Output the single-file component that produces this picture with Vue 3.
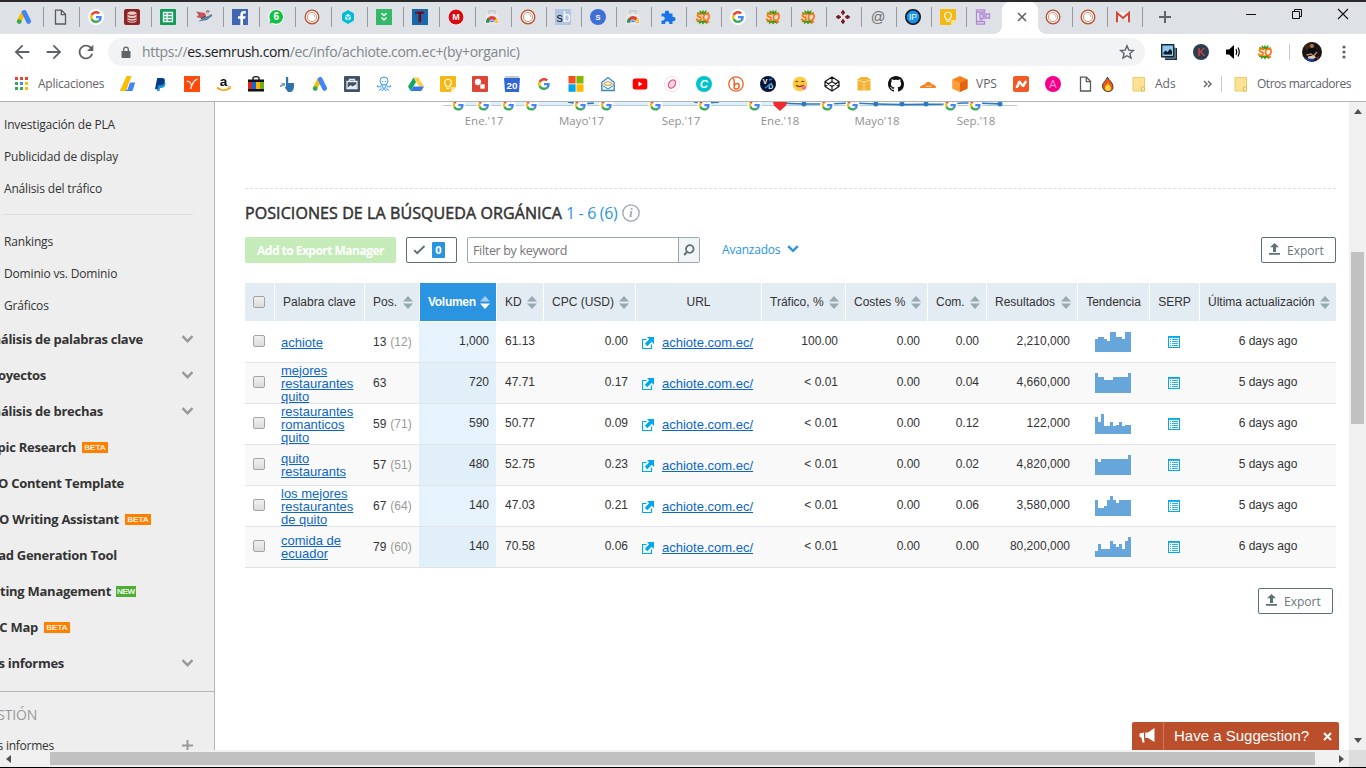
<script setup>
const g = '<path fill="#EA4335" d="M24 9.5c3.54 0 6.71 1.22 9.21 3.6l6.85-6.85C35.9 2.38 30.47 0 24 0 14.62 0 6.51 5.38 2.56 13.22l7.98 6.19C12.43 13.72 17.74 9.5 24 9.5z"/><path fill="#4285F4" d="M46.98 24.55c0-1.57-.15-3.09-.38-4.55H24v9.02h12.94c-.58 2.96-2.26 5.48-4.78 7.18l7.73 6c4.51-4.18 7.09-10.36 7.09-17.65z"/><path fill="#FBBC05" d="M10.53 28.59c-.48-1.45-.76-2.99-.76-4.59s.27-3.14.76-4.59l-7.98-6.19C.92 16.46 0 20.12 0 24c0 3.88.92 7.54 2.56 10.78l7.97-6.19z"/><path fill="#34A853" d="M24 48c6.48 0 11.93-2.13 15.89-5.81l-7.73-6c-2.15 1.45-4.92 2.3-8.16 2.3-6.26 0-11.57-4.22-13.47-9.91l-7.98 6.19C6.51 42.62 14.62 48 24 48z"/>'
const t = (s, x, y, size, fill, extra = '') => `<text x="${x}" y="${y}" font-size="${size}" fill="${fill}" text-anchor="middle" font-family="Liberation Sans, Arial, sans-serif" ${extra}>${s}</text>`
const bold = 'font-weight="700"'

const icons = {
  ads: '<path d="M7.8 3 3.2 12" stroke="#fbbc04" stroke-width="4.6" stroke-linecap="butt"/><path d="M8.2 3.4 12.6 12.4" stroke="#4285f4" stroke-width="4.8" stroke-linecap="round"/><circle cx="3.2" cy="12.6" r="2.4" fill="#34a853"/>',
  page: '<path d="M3.5 1.2h6l4 4v9.8h-10z M9.3 1.4v4.2h4" fill="none" stroke="#5a5a5a" stroke-width="1.3"/>',
  google: `<circle cx="8" cy="8" r="8" fill="#fff"/><g transform="translate(2 2) scale(.25)">${g}</g>`,
  googlePlain: `<g transform="translate(2 2) scale(.25)">${g}</g>`,
  db: '<rect width="16" height="16" rx="2" fill="#8c2626"/><path d="M3.5 4.2c0-1 2-1.7 4.5-1.7s4.5.7 4.5 1.7v7.8c0 1-2 1.7-4.5 1.7S3.5 13 3.5 12z" fill="#e9c9c4"/><path d="M3.5 5.2c1.6 1.6 7.4 1.6 9 0M3.5 8.4c1.6 1.6 7.4 1.6 9 0M3.5 11c1.6 1.6 7.4 1.6 9 0" stroke="#8c2626" fill="none"/>',
  sheets: '<rect width="16" height="16" rx="1" fill="#0f9d58"/><path d="M3.5 3.5h9v9h-9zM3.5 6.5h9M3.5 9.5h9M7 3.5v9" stroke="#fff" stroke-width="1.3" fill="none"/>',
  hero: '<path d="M0 2.500 9 4l1.500 4-5 1.500-5-1.500L2.600 6z" fill="#c5555b"/><path d="m2 12.800 5-3.600 5-2.200 4-2 .2 2-5.200 4-4.500.8z" fill="#5583a3"/><circle cx="11.700" cy="4" r="1.600" fill="#edb99b"/><path d="M10.300 3.200c.2-1.800 2.700-1.800 3-.3" stroke="#294254" fill="none"/><path d="M5 9.800l4-2.500" stroke="#294254"/>',
  facebook: '<rect width="16" height="16" fill="#4267b2"/><path d="M11 16V9.8h2.2l.4-2.6H11V5.8c0-.9.4-1.4 1.5-1.4h1.2V2.1C13.200 2 12.700 2 12 2 9.700 2 8.400 3.300 8.400 5.500v1.700H6v2.600h2.400V16z" fill="#fff"/>',
  whatsapp: '<circle cx="8" cy="8" r="7.9" fill="#fff"/><circle cx="8.200" cy="7.800" r="6.900" fill="#12c143"/><path d="m1.600 14.500 1-4.500 3 3.200z" fill="#12c143"/>' + t('6', 8.2, 11.4, 10, '#fff', bold),
  ring: '<circle cx="8" cy="8" r="6.800" fill="#fff" stroke="#b4502f" stroke-width="1.300"/><circle cx="8" cy="8" r="4.600" fill="none" stroke="#cf8368" stroke-width=".9"/><path d="M8.500 5.200c1.500.2 2.300 1.300 2.200 2.600" stroke="#e9a58e" fill="none"/>',
  cube: '<path d="M8 1.500 13.500 4.700v6.600L8 14.500 2.500 11.300V4.700z" fill="#00bcd4" stroke="#00bcd4" stroke-linejoin="round"/><path d="m8 5 2.700 1.500L8 8 5.300 6.500zM5 7.300l2.500 1.400v2.700L5 10zM11 7.300 8.500 8.700v2.700L11 10z" fill="#d8f7fb"/>',
  green: '<rect width="16" height="16" fill="#34b96a"/><path d="M5.500 4.200 8 6.500l2.500-2.300M5.500 8.500 8 11l2.500-2.500" stroke="#fff" stroke-width="1.300" fill="none"/>',
  t: '<rect width="16" height="16" fill="#1769ad"/>' + t('T', 8, 13, 14, '#160a12', 'font-weight="700" stroke="#8e1734" stroke-width=".9"'),
  mega: '<circle cx="8" cy="8" r="8" fill="#fff"/><circle cx="8" cy="8" r="7.500" fill="#d9090f"/>' + t('M', 8, 11.2, 9, '#fff', bold),
  store: '<path d="M2 5h12l1.500 10.500H.500z" fill="#e9e9e9"/><path d="M5 5V2h6v3" stroke="#c3c7ca" fill="none" stroke-width="1.300"/><path d="M2 13.500a6 6.500 0 0 1 12 0z" fill="#db4437"/><path d="M2 13.500c0-1.500.6-3.200 1.700-4.500L7 13.500z" fill="#109d59"/><path d="M9 13.500 12.400 9c1.200 1.200 1.600 3 1.600 4.500z" fill="#ffcd40"/><path d="M5.500 13.500a2.500 2.700 0 0 1 5 0z" fill="#4285f4" stroke="#fff" stroke-width=".7"/>',
  sb: '<rect width="16" height="16" fill="#b0c4e4"/>' + t('s', 4.6, 13, 12.5, '#111') + t('b', 11.6, 13, 14, '#fff'),
  s: '<circle cx="8" cy="8" r="8" fill="#3f6fd6"/>' + t('S', 8, 10.8, 7.5, '#fff', bold),
  puzzle: '<path d="M1.500 4.500H5A2.200 2.200 0 1 1 9 4.500h3.500V8A2.200 2.200 0 1 1 12.500 12v3H9.200a2.100 2.100 0 1 0-4 0H1.500v-3.800a2.100 2.100 0 1 0 0-3.500z" fill="#1a73e8"/>',
  sq: '<path d="m8 .500 1 2.500L11.500.800l-.3 3 3-.5L13 5.500H3L2 3l2.800.8L4.500 1 7 3zM3 11.500h10l1.500 2-2.500-.2.200 2-2.500-1.800L8 15.500l-1.500-2-2.700 1.800.3-2.300-2.600.2z" fill="#389c18"/>' + t('SQ', 8, 12, 10.5, '#ff7200', 'font-weight="700" font-style="italic" textLength="14" lengthAdjust="spacingAndGlyphs" stroke="#ff7200" stroke-width=".3"'),
  dots: '<path d="m8 1.500 1.500 2L8 5.500l-1.500-2zM8 10.500l1.500 2-1.500 2-1.500-2zM1.500 8l2-1.500 2 1.500-2 1.500zM10.500 8l2-1.500 2 1.500-2 1.500z" fill="#761b28" stroke="#761b28" stroke-width="1.200" stroke-linejoin="round"/>',
  at: t('@', 8, 12.8, 14.5, '#6f6f6f'),
  ip: '<circle cx="8" cy="8" r="7.200" fill="#1590f0" stroke="#111" stroke-width="1.600"/>' + t('IP', 8, 11, 8.5, '#fff'),
  keep: '<path d="M1 0h14q1 0 1 1v10l-5 5H1q-1 0-1-1V1q0-1 1-1z" fill="#f5b912"/><path d="M16 11h-4q-1 0-1 1v4z" fill="#ffe299"/><path d="M8 3.200a3.300 3.300 0 0 1 2 6v1.500H6V9.200a3.300 3.300 0 0 1 2-6z" fill="none" stroke="#fff" stroke-width="1.100"/><path d="M6.300 12.400h3.400" stroke="#fff"/>',
  phone: '<path d="M1.500.800h8v3M1.500.800v14.400h8V12M1.500 3h8M1.500 12.500h8M5 5h9.500v4H8L6 11V9H5zM7 7h5" fill="none" stroke="#b286d8" stroke-width="1.300"/>',
  gmail: '<path d="M2 3h12v10H2z" fill="#f2f0f0"/><path d="M2.500 13 8 8.500l5.500 4.500z" fill="#dedede"/><path d="M2 13.200V4l6 5 6-5v9.200" stroke="#d54538" stroke-width="2" fill="none"/>',
  adsense: '<path d="M6.500 0h5L6 15H0z" fill="#fbbc04"/><path d="M10 6.500h5.200L12.500 15H3.500l4-1.500z" fill="#4285f4"/><path d="M0 15h5.500l1-3H1.200z" fill="#fbbc04"/>',
  paypal: '<path d="M6.200 6h5.600c1.700 0 2 1.200 1.400 3S11.300 12 9 12H8l-.5 3H5z" fill="#1997d4"/><path d="M5.200 2h5c2 0 3.200 1.200 2.500 3.700S10.500 9.300 8.500 9.300H6.300l-.7 4H3z" fill="#073a86"/>',
  yoast: '<rect width="16" height="16" fill="#ff4a0c"/><path d="M2.800 5.500c2.500-.5 4 .8 4.600 3.800M13.500 3.200C10 4 8 8 6.600 13" stroke="#fff" stroke-width="1.200" fill="none"/>',
  amazon: t('a', 7.5, 9.8, 13.5, '#111', bold) + '<path d="M1 11.500c4 3.500 9 3.400 12.500.5" stroke="#ff9900" stroke-width="1.700" fill="none"/><path d="m11.500 11 3-.4-.5 3" stroke="#ff9900" fill="none"/>',
  ebay: '<path d="M5 4V1.500q3-1.800 6 0V4" stroke="#111" fill="none" stroke-width="1.300"/><path d="M0 3.500h16V6H0zM0 13h16v2.500H0z" fill="#111"/><path d="M0 6h4v7H0z" fill="#d9261c"/><path d="M4 6h4v7H4z" fill="#1265d6"/><path d="M8 6h4v7H8z" fill="#ffb400"/><path d="M12 6h4v7h-4z" fill="#6cae14"/>',
  hand: '<path d="M6 1h2.200v6H14v4q-.5 4-3 5H8L4.800 11.500 6 10.500z" fill="#2f73ad"/><path d="M1 7h4v3H2zM0 9h2v2H0z" fill="#7ba6cd"/>',
  badge: '<rect width="16" height="16" rx="1" fill="#3e5165"/><path d="M3 5.500h10v7H3zM5.500 5.500v-2h5v2" stroke="#e8ecef" stroke-width="1.300" fill="none"/><path d="m3.500 12 3-3 2 1.500L12.500 8v4z" fill="#e8ecef"/>',
  octopus: '<circle cx="8" cy="5" r="4" fill="none" stroke="#3d99f5"/><path d="M5.500 8.500q0 3-3.500 2.500-1.500-1 0-2M6.800 9.300q0 4-4 5.200M9.200 9.300q0 4 4 5.200M10.500 8.500q0 3 3.500 2.500 1.500-1 0-2M5.500 15Q8 14 8 11.500 8 14 10.500 15" fill="none" stroke="#3d99f5"/><circle cx="6.500" cy="5.500" r=".7" fill="#3d99f5"/><circle cx="9.500" cy="5.500" r=".7" fill="#3d99f5"/>',
  drive: '<path d="M5.500 1.500h5L16 10.500h-5z" fill="#ffcf48"/><path d="M5.500 1.500 8 6 2.700 15 0 10.500z" fill="#11a861"/><path d="M5.400 10.500H16L13.300 15H2.700z" fill="#3777e3"/>',
  shapes: '<rect width="16" height="16" rx="1" fill="#db4437"/><circle cx="6" cy="6" r="3.200" fill="#fff"/><path d="M8 8h5v5H8z" fill="#fff" stroke="#db4437" stroke-width=".6"/>',
  calendar: '<path d="M1 0h14v3H1z" fill="#c8c8c8"/><path d="M0 2h16l-1 14H1z" fill="#3367d6"/>' + t('20', 8, 12.7, 9.8, '#fff', bold),
  windows: '<path d="M.500 0H7.600v7.500H.500z" fill="#f25022"/><path d="M8.400 0H15.500v7.500H8.400z" fill="#7fba00"/><path d="M.500 8.300H7.600V15.800H.500z" fill="#00a4ef"/><path d="M8.400 8.300H15.500V15.800H8.400z" fill="#ffb900"/>',
  mail: '<path d="M1.800 6.200 8 1.500l6.200 4.700v8.300H1.800z" fill="#eaf4fa" stroke="#3b87b8" stroke-width="1.300"/><path d="M4 8c1-3 7-3 8 0M4 8q4 3 8 0" fill="none" stroke="#eaa437" stroke-width="1.200"/><path d="m2.500 9.500 5.500 3.500 5.500-3.500" fill="none" stroke="#3b87b8"/>',
  youtube: '<rect x=".7" y="2.500" width="14.600" height="11" rx="2.500" fill="#f00"/><path d="m6.500 5.500 4 2.500-4 2.500z" fill="#fff"/>',
  pink: '<circle cx="8" cy="8" r="7.500" fill="#fff" stroke="#f4d3df" stroke-width=".8"/><ellipse cx="8" cy="8" rx="3.200" ry="4.500" transform="rotate(35 8 8)" fill="#fbd7e4" stroke="#ec5b91" stroke-width="1.400"/>',
  c: '<circle cx="8" cy="8" r="8" fill="#00c4cc"/>' + t('C', 7.8, 12.1, 11.5, '#fff', 'font-weight="700" font-style="italic"'),
  bitly: '<circle cx="8" cy="8" r="7.200" fill="#fff" stroke="#ee6123" stroke-width="1.300"/><path d="M5 2.500q1.500 1 1.200 4v5c0 2.500 5 2 5-1.500s-4-3-5 0" fill="none" stroke="#ee6123" stroke-width="1.500"/>',
  vd: '<circle cx="8" cy="8" r="8" fill="#071334"/>' + t('V', 5.2, 8, 7, '#fff', bold) + t('D', 10.8, 13, 7, '#c5e7ff', bold) + '<path d="M5 12c3-1 4-4 7-5M9 4l3-1" stroke="#1d8edb" stroke-width="1.400"/>',
  emoji: '<circle cx="8" cy="8" r="7.300" fill="#ffca3c"/><path d="M3.500 6q1-1.500 2.500 0M9.500 6q1-1.500 2.500 0" stroke="#6b431b" stroke-width="1.200" fill="none"/><path d="M3.800 9.300q4 2.700 8-.3" stroke="#7d3217" stroke-width="1.200" fill="none"/><circle cx="12" cy="11.500" r="2.200" fill="#ef6f9c"/>',
  codepen: '<path d="M8 1 15 5.600v4.800L8 15 1 10.400V5.600zM1 5.600l7 4.800 7-4.800M1 10.400l7-4.800 7 4.800M8 1v4.600M8 10.400V15" fill="none" stroke="#161616" stroke-width="1.200" stroke-linejoin="round"/>',
  box: '<path d="M1.500 3.500 5 1h6l3.500 2.500v11h-13z" fill="#f5b335"/><path d="M1.500 4.200 8 6l6.500-1.800M8 6v8.500" stroke="#fbe0a6" fill="none"/>',
  github: '<path d="M8 0C3.580 0 0 3.580 0 8c0 3.540 2.290 6.530 5.470 7.590.4.07.55-.17.55-.38 0-.19-.01-.82-.01-1.490-2.010.37-2.530-.49-2.690-.94-.09-.23-.48-.94-.82-1.130-.28-.15-.68-.52-.01-.53.63-.01 1.080.58 1.230.82.72 1.210 1.870.87 2.330.66.07-.52.28-.87.51-1.070-1.780-.2-3.640-.89-3.640-3.950 0-.87.31-1.590.82-2.150-.08-.2-.36-1.020.08-2.120 0 0 .67-.21 2.200.82.64-.18 1.320-.27 2-.27.68 0 1.360.09 2 .27 1.530-1.040 2.200-.82 2.200-.82.44 1.100.16 1.920.08 2.120.51.56.82 1.270.82 2.150 0 3.070-1.870 3.750-3.650 3.950.29.25.54.73.54 1.480 0 1.070-.01 1.930-.01 2.200 0 .21.15.46.55.38A8.013 8.013 0 0016 8c0-4.420-3.580-8-8-8z" fill="#111"/>',
  cloud: '<path d="M0 12c0-2 1.500-3 3-2.700C3.500 8 4.500 8 5.200 8.300 6 5 10.500 4.500 11.500 8.300 14 8.300 16 9.500 16 12z" fill="#f6821f"/><path d="M6 10.300h5.500" stroke="#fff" stroke-width=".7"/>',
  hex: '<path d="m8 0 7.500 3.500v9L8 16 .500 12.500v-9z" fill="#f7821c"/><path d="M.500 3.500 8 7v9L.500 12.500z" fill="#ff9d3c"/><path d="m8 7 7.500-3.500v9L8 16z" fill="#e4650f"/>',
  namecheap: '<rect width="16" height="16" rx="2" fill="#f15a24"/><path d="M2.800 11Q5 11 5.500 7.500T8 7.500t2.500 2T13.200 5" fill="none" stroke="#fff" stroke-width="2.400"/>',
  a: '<circle cx="8" cy="8" r="8" fill="#f5008b"/>' + t('A', 8, 12, 11, '#ff9bd0'),
  fire: '<path d="M7.500 1c1 3 5.500 5.500 5.500 9.500S11 15.500 8 15.500 2.500 13.500 2.500 10 6 5 7.500 1z" fill="#ef5a14" stroke="#252525" stroke-width=".8"/><path d="M8 7c.5 2 3 3.200 3 5.300S9.500 15 8 15s-3-.8-3-3S7.500 9 8 7z" fill="#ffd737"/>',
  folder: '<path d="M2 1.500h11.500v13.500H2z" fill="#fde293" stroke="#edc967"/><path d="M10.500 15v-4h3v4z" fill="#ffe7a3" stroke="#e3bc59"/>',
  photos: '<path d="M4 4h12v12H4z" fill="#1d2a35"/><path d="M14 2.500V14H3" stroke="#8fc7ee" fill="none"/><path d="M.700.700h12v12h-12z" fill="#8fc7ee" stroke="#1d2a35" stroke-width="1.400"/><path d="M2.500 10.500V8.500l2-2 2 1.500 2.500-3 2 2v3.500z" fill="#111c25"/>',
  k: '<circle cx="8" cy="8" r="8" fill="#2c3e50"/>' + t('K', 8, 12, 11.5, '#e5433b'),
  speaker: '<path d="M1 5.500h3l5-4.500v14l-5-4.500H1z" fill="#000"/><path d="M11 5q1.500 3 0 6M13 3.500q2.500 4.500 0 9" stroke="#000" stroke-width="1.200" fill="none"/>'
}

const wideTabs = ['ads', 'page', 'google', 'db', 'sheets', 'hero', 'facebook', 'whatsapp', 'ring', 'cube', 'green', 't', 'mega', 'store']
const tabs = ['ring', 'sb', 's', 'store', 'puzzle', 'sq', 'google', 'sq', 'sq', 'dots', 'at', 'ip', 'keep', 'phone']
const tabsAfter = ['ring', 'ring', 'gmail']
const bookmarks = ['adsense', 'paypal', 'yoast', 'amazon', 'ebay', 'hand', 'ads', 'badge', 'octopus', 'drive', 'keep', 'shapes', 'calendar', 'googlePlain', 'windows', 'mail', 'youtube', 'pink', 'c', 'bitly', 'vd', 'emoji', 'codepen', 'box', 'github', 'cloud', 'hex']
const extensions = ['photos', 'k', 'speaker', 'sq']
const appColors = ['#ea4335', '#ea4335', '#ea4335', '#34a853', '#4285f4', '#fbbc04', '#34a853', '#34a853', '#fbbc04']

const subA = ['Investigación de PLA', 'Publicidad de display', 'Análisis del tráfico']
const subB = ['Rankings', 'Dominio vs. Dominio', 'Gráficos']
const groups = [
  { label: 'Análisis de palabras clave', end: 143, more: true },
  { label: 'Proyectos', end: 46, more: true },
  { label: 'Análisis de brechas', end: 103, more: true },
  { label: 'Topic Research', end: 76, tag: 'BETA' },
  { label: 'SEO Content Template', end: 124 },
  { label: 'SEO Writing Assistant', end: 119, tag: 'BETA' },
  { label: 'Lead Generation Tool', end: 117 },
  { label: 'Listing Management', end: 111, tag: 'NEW' },
  { label: 'CPC Map', end: 38, tag: 'BETA' },
  { label: 'Mis informes', end: 64, more: true }
]

const gMarks = [458.3, 483.6, 508.5, 531.4, 580.4, 606.4, 655.4, 704.4, 754.5, 827.2, 852.5, 950.5, 975.3]
const points = [803.9, 875.8, 901.9, 926, 1000]
const months = [["Ene.'17", 484], ["Mayo'17", 581.5], ["Sep.'17", 681], ["Ene.'18", 780], ["Mayo'18", 877], ["Sep.'18", 976]]

const columns = [
  { label: 'Palabra clave' },
  { label: 'Pos.', sort: true },
  { label: 'Volumen', sort: true, active: true },
  { label: 'KD', sort: true },
  { label: 'CPC (USD)', sort: true },
  { label: 'URL', center: true },
  { label: 'Tráfico, %', sort: true },
  { label: 'Costes %', sort: true },
  { label: 'Com.', sort: true },
  { label: 'Resultados', sort: true },
  { label: 'Tendencia', center: true },
  { label: 'SERP', center: true },
  { label: 'Última actualización', sort: true }
]
const rows = [
  { kw: ['achiote'], pos: '13', prev: '(12)', vol: '1,000', kd: '61.13', cpc: '0.00', traf: '100.00', cost: '0.00', com: '0.00', res: '2,210,000', ago: '6 days ago', trend: [13, 15, 15, 13, 11, 20, 20, 15, 15, 13, 20, 20] },
  { kw: ['mejores', 'restaurantes', 'quito'], pos: '63', prev: '', vol: '720', kd: '47.71', cpc: '0.17', traf: '< 0.01', cost: '0.00', com: '0.04', res: '4,660,000', ago: '5 days ago', trend: [20, 16, 16, 13, 13, 13, 16, 16, 16, 16, 16, 20] },
  { kw: ['restaurantes', 'romanticos', 'quito'], pos: '59', prev: '(71)', vol: '590', kd: '50.77', cpc: '0.09', traf: '< 0.01', cost: '0.00', com: '0.12', res: '122,000', ago: '6 days ago', trend: [17, 12, 20, 8, 8, 12, 8, 9, 12, 8, 9, 9] },
  { kw: ['quito', 'restaurants'], pos: '57', prev: '(51)', vol: '480', kd: '52.75', cpc: '0.23', traf: '< 0.01', cost: '0.00', com: '0.02', res: '4,820,000', ago: '5 days ago', trend: [16, 13, 16, 16, 16, 16, 16, 16, 16, 16, 16, 20] },
  { kw: ['los mejores', 'restaurantes', 'de quito'], pos: '67', prev: '(64)', vol: '140', kd: '47.03', cpc: '0.21', traf: '< 0.01', cost: '0.00', com: '0.06', res: '3,580,000', ago: '5 days ago', trend: [16, 8, 8, 10, 16, 20, 16, 13, 16, 16, 16, 16] },
  { kw: ['comida de', 'ecuador'], pos: '79', prev: '(60)', vol: '140', kd: '70.58', cpc: '0.06', traf: '< 0.01', cost: '0.00', com: '0.00', res: '80,200,000', ago: '6 days ago', trend: [6, 13, 8, 8, 8, 16, 13, 10, 13, 8, 16, 20] }
]
</script>

<template>
  <div class="window">
    <div class="edge"></div>
    <div class="tabstrip">
      <div v-for="(n, i) in wideTabs" :key="'w' + i" class="tab wide"><svg class="fav" viewBox="0 0 16 16" fill="none" v-html="icons[n]"></svg></div>
      <div v-for="(n, i) in tabs" :key="'t' + i" class="tab" :class="{ last: i === tabs.length - 1 }"><svg class="fav" viewBox="0 0 16 16" v-html="icons[n]"></svg></div>
      <div class="tab-active"><svg width="10" height="10" viewBox="0 0 10 10"><path d="M1 1l8 8M9 1L1 9" stroke="#5f6368" stroke-width="1.600" /></svg></div>
      <div v-for="(n, i) in tabsAfter" :key="'a' + i" class="tab after"><svg class="fav" viewBox="0 0 16 16" v-html="icons[n]"></svg></div>
      <div class="newtab"><svg width="12" height="12" viewBox="0 0 12 12"><path d="M6 0v12M0 6h12" stroke="#5f6368" stroke-width="2" /></svg></div>
      <div class="winctl">
        <svg width="12" height="12" viewBox="0 0 12 12"><path d="M1 6.500h10" stroke="#111" /></svg>
        <svg width="12" height="12" viewBox="0 0 12 12"><path d="M3.500 3V1.500h7v7H8.800M1.500 3.500h7v7h-7z" fill="none" stroke="#111" /></svg>
        <svg width="12" height="12" viewBox="0 0 12 12"><path d="M1 1l10 10M11 1L1 11" stroke="#111" stroke-width="1.100" /></svg>
      </div>
    </div>

    <div class="toolbar">
      <svg class="nav" viewBox="0 0 24 24"><path d="M20 11H7.830l5.590-5.590L12 4l-8 8 8 8 1.410-1.410L7.830 13H20v-2z" /></svg>
      <svg class="nav" viewBox="0 0 24 24"><path d="M12 4l-1.410 1.410L16.170 11H4v2h12.170l-5.580 5.590L12 20l8-8z" /></svg>
      <svg class="nav" viewBox="0 0 24 24"><path d="M17.650 6.350C16.200 4.900 14.210 4 12 4c-4.420 0-7.990 3.580-7.990 8s3.570 8 7.990 8c3.730 0 6.840-2.550 7.730-6h-2.080c-.82 2.330-3.040 4-5.650 4-3.310 0-6-2.690-6-6s2.690-6 6-6c1.660 0 3.140.69 4.220 1.780L13 11h7V4l-2.350 2.350z" /></svg>
      <div class="omnibox">
        <svg class="lock" width="10" height="13" viewBox="0 0 10 13"><path d="M1 5h8q.500 0 .500.500V11q0 1-1 1h-7q-1 0-1-1V5.500Q.500 5 1 5z" fill="#5f6368" /><path d="M2.700 5V3.400a2.300 2.300 0 0 1 4.600 0V5" fill="none" stroke="#5f6368" stroke-width="1.300" /></svg>
        <span class="url">https://<b>es.semrush.com</b>/ec/info/achiote.com.ec+(by+organic)</span>
        <svg class="star" width="16" height="16" viewBox="0 0 16 16"><path d="m8 1.800 1.800 4.300 4.600.4-3.500 3 1.100 4.600L8 11.700l-4 2.400 1.100-4.600-3.500-3 4.600-.4z" fill="none" stroke="#5f6368" stroke-width="1.400" /></svg>
      </div>
      <div class="exts">
        <svg v-for="n in extensions" :key="n" class="ext" viewBox="0 0 16 16" v-html="icons[n]"></svg>
      </div>
      <i class="vline"></i>
      <svg class="avatar" width="20" height="20" viewBox="0 0 20 20"><circle cx="10" cy="10" r="10" fill="#1a1412" /><path d="M2 4.500Q6 0 10 0v7l-6 1z" fill="#3b2415" /><circle cx="10" cy="4" r="2" fill="#a8744f" /><path d="M6 7q4.500-2 8 0l1 5.500-9 1z" fill="#0b0d14" /><path d="m4.500 13 4.500-1 2.500 2 3.500-4" stroke="#b98660" stroke-width="1.500" fill="none" /><path d="m6 14.500 6-1 2 2q-4 3-8 1z" fill="#dfd2b8" /><path d="M2.500 15l4 1.500 6 .5-1 3Q5 20 2.500 15z" fill="#213f91" /><path d="m14 16 3-2-1 3z" fill="#b3283b" /></svg>
      <svg class="kebab" width="4" height="14" viewBox="0 0 4 14"><circle cx="2" cy="2" r="1.600" /><circle cx="2" cy="7" r="1.600" /><circle cx="2" cy="12" r="1.600" /></svg>
    </div>

    <div class="bookmarks">
      <div class="apps"><i v-for="(c, i) in appColors" :key="i" :style="{ background: c }"></i></div>
      <span class="bm-apps">Aplicaciones</span>
      <div class="bm-row">
        <div v-for="n in bookmarks" :key="n" class="bm"><svg class="fav" viewBox="0 0 16 16" v-html="icons[n]"></svg></div>
      </div>
      <span class="bm-vps">VPS</span>
      <svg class="fav bm-nc" viewBox="0 0 16 16" v-html="icons.namecheap"></svg>
      <svg class="fav bm-a" viewBox="0 0 16 16" v-html="icons.a"></svg>
      <svg class="fav bm-page" viewBox="0 0 16 16" v-html="icons.page"></svg>
      <svg class="fav bm-fire" viewBox="0 0 16 16" v-html="icons.fire"></svg>
      <svg class="fav bm-fold" viewBox="0 0 16 16" v-html="icons.folder"></svg>
      <span class="bm-ads">Ads</span>
      <svg class="bm-more" width="9" height="8" viewBox="0 0 9 8"><path d="M1 1l3 3-3 3M5 1l3 3-3 3" fill="none" stroke="#5f6368" stroke-width="1.400" /></svg>
      <i class="vline bm-line"></i>
      <svg class="fav" viewBox="0 0 16 16" v-html="icons.folder"></svg>
      <span class="bm-other">Otros marcadores</span>
    </div>

    <div class="viewport">
      <aside class="side">
        <div class="subs first"><a v-for="s in subA" :key="s"><span>{{ s }}</span></a></div>
        <hr>
        <div class="subs second"><a v-for="s in subB" :key="s"><span>{{ s }}</span></a></div>
        <div class="groups">
          <div v-for="x in groups" :key="x.label" class="group">
            <div class="glabel" :style="{ width: x.end + 'px' }"><span>{{ x.label }}</span></div>
            <em v-if="x.tag" :class="x.tag.toLowerCase()">{{ x.tag }}</em>
            <svg v-if="x.more" class="chev" width="12" height="8" viewBox="0 0 12 8"><path d="M1 1.200l5 5 5-5" fill="none" stroke="#999" stroke-width="2.400" /></svg>
          </div>
        </div>
        <div class="manage">
          <div class="mtitle"><span>GESTIÓN</span></div>
          <div class="mrow"><div class="mlabel"><span>Mis informes</span></div><svg width="11" height="11" viewBox="0 0 11 11"><path d="M5.500 0v11M0 5.500h11" stroke="#999" stroke-width="2" /></svg></div>
        </div>
      </aside>

      <main class="main">
        <svg class="chart" width="1104" height="30" viewBox="245 102 1104 30">
          <path d="M458 102h322v3H458z" fill="#dff0fb" />
          <path d="M443 105.500h574" stroke="#b4cddd" />
          <path d="M568 102l12 2.200 14-1.200M694 102l9 1.500 16-1.500M780 103.200l24 .8h22M827 104l26-1 23 1 26 .600 24-.300 24-.3 13-1 12 0 25 .8" stroke="#2c7bbd" stroke-width="1.700" fill="none" />
          <circle v-for="p in points" :key="p" :cx="p" cy="104" r="2.500" fill="#2c7bbd" />
          <g v-for="m in gMarks" :key="m"><circle :cx="m" cy="105" r="7" fill="#fff" /><g :transform="`translate(${m - 5.5} 99.5) scale(.2292)`" v-html="g"></g></g>
          <path d="M773 102h14l-1 3.500-6 5.500-6-5.500z" fill="#f02a2f" />
          <text v-for="m in months" :key="m[0]" :x="m[1]" y="125" class="month" text-anchor="middle">{{ m[0] }}</text>
        </svg>
        <div class="dash"></div>
        <h1><span class="title">POSICIONES DE LA BÚSQUEDA ORGÁNICA</span><span class="count">1 - 6 (6)</span>
          <svg class="info" width="18" height="18" viewBox="0 0 18 18"><circle cx="9" cy="9" r="8.200" fill="none" stroke="#9aa8ae" stroke-width="1.300" /><text x="9" y="13" text-anchor="middle" font-family="Liberation Serif, serif" font-style="italic" font-weight="700" font-size="12" fill="#9aa8ae">i</text></svg>
        </h1>
        <div class="controls">
          <button class="add"><span>Add to Export Manager</span></button>
          <button class="sel"><svg width="13" height="10" viewBox="0 0 13 10"><path d="M1.200 5.200l3 3L11.500 1" fill="none" stroke="#5f6f76" stroke-width="1.900" /></svg><b>0</b></button>
          <div class="filter"><span>Filter by keyword</span><div class="go"><svg width="12" height="12" viewBox="0 0 12 12"><circle cx="6.800" cy="5" r="3.800" fill="none" stroke="#5f6f76" stroke-width="1.800" /><path d="M4.200 7.800 1.200 11" stroke="#5f6f76" stroke-width="2" /></svg></div></div>
          <div class="adv"><span>Avanzados</span><svg width="12" height="8" viewBox="0 0 12 8"><path d="M1.200 1.200 6 5.800l4.800-4.600" fill="none" stroke="#2a94e1" stroke-width="2.400" /></svg></div>
          <button class="export"><svg width="11" height="12" viewBox="0 0 11 12"><path d="M5.500 0 10 4.200H7V9H4V4.200H1zM0 10h11v1.800H0z" fill="#5f6f76" /></svg><span>Export</span></button>
        </div>

        <div class="table">
          <div class="tr head">
            <div class="th chk"><i class="box"></i></div>
            <div v-for="c in columns" :key="c.label" class="th" :class="{ center: c.center, active: c.active }">
              <span>{{ c.label }}</span>
              <svg v-if="c.sort" width="10" height="13" viewBox="0 0 10 13"><path d="M0 5.500 5 0l5 5.500z" :fill="c.active ? '#a5cff0' : '#98a9b0'" /><path d="M0 7.500h10L5 13z" :fill="c.active ? '#fff' : '#98a9b0'" /></svg>
            </div>
          </div>
          <div v-for="r in rows" :key="r.pos" class="tr row">
            <div class="td chk"><i class="box"></i></div>
            <div class="td kw"><a><span v-for="k in r.kw" :key="k">{{ k }}</span></a></div>
            <div class="td pos">{{ r.pos }}<small v-if="r.prev">{{ r.prev }}</small></div>
            <div class="td num vol">{{ r.vol }}</div>
            <div class="td kd">{{ r.kd }}</div>
            <div class="td num">{{ r.cpc }}</div>
            <div class="td link">
              <svg width="12" height="12" viewBox="0 0 12 12"><path d="M4.500 2.500H.500v9h9V7.500" fill="none" stroke="#00a8f0" stroke-width="1.200" /><path d="M5 0h7v7L9.700 4.700 5.300 9.200 2.800 6.700 7.200 2.300z" fill="#00a8f0" /></svg>
              <a>achiote.com.ec/</a>
            </div>
            <div class="td num">{{ r.traf }}</div>
            <div class="td num">{{ r.cost }}</div>
            <div class="td num">{{ r.com }}</div>
            <div class="td num">{{ r.res }}</div>
            <div class="td trend"><div class="bars"><i v-for="(h, i) in r.trend" :key="i" :style="{ height: h + 'px' }"></i></div></div>
            <div class="td serp"><svg width="12" height="12" viewBox="0 0 12 12" shape-rendering="crispEdges"><path d="M.500.500h11v11H.500z" fill="#fff" stroke="#00a8f0" /><path d="M1 1h10v1H1zM2 3h1v1H2zM4 3h6v1H4zM2 5h1v1H2zM4 5h6v1H4zM2 7h1v1H2zM4 7h6v1H4zM2 9h1v1H2zM4 9h6v1H4z" fill="#2bb3ee" /></svg></div>
            <div class="td ago">{{ r.ago }}</div>
          </div>
        </div>

        <button class="export bottom"><svg width="11" height="12" viewBox="0 0 11 12"><path d="M5.500 0 10 4.200H7V9H4V4.200H1zM0 10h11v1.800H0z" fill="#5f6f76" /></svg><span>Export</span></button>

        <div class="suggest">
          <div class="horn"><svg width="16" height="15" viewBox="0 0 16 15"><path d="M15.500 0v14L9 10H6.300V4.500H9zM5 4.500V10l.5 4.500h-2L2.500 10 .500 8.500V5.500z" fill="#fff" /></svg></div>
          <span class="stext">Have a Suggestion?</span>
          <svg width="9" height="9" viewBox="0 0 9 9"><path d="M1 1l7 7M8 1L1 8" stroke="#fff" stroke-width="2" /></svg>
        </div>
      </main>

      <div class="vscroll">
        <svg width="8" height="5" viewBox="0 0 8 5"><path d="M0 5l4-5 4 5z" fill="#505050" /></svg>
        <i class="vthumb"></i>
        <svg class="down" width="8" height="5" viewBox="0 0 8 5"><path d="M0 0l4 5 4-5z" fill="#505050" /></svg>
      </div>
    </div>
    <div class="hscroll">
      <svg width="5" height="8" viewBox="0 0 5 8"><path d="M5 0L0 4l5 4z" fill="#505050" /></svg>
      <i class="hthumb"></i>
      <svg class="right" width="5" height="8" viewBox="0 0 5 8"><path d="M0 0l5 4-5 4z" fill="#505050" /></svg>
      <div class="corner"></div>
    </div>
  </div>
</template>

<style>
body { margin: 0; background: #000; }
</style>

<style scoped>
* { box-sizing: border-box; }
svg { display: block; flex: none; }
.window { width: 1366px; height: 767px; overflow: hidden; display: flex; flex-direction: column; background: #fff; font-family: "Open Sans", "Noto Sans", sans-serif; }
.edge { height: 2px; background: #2b2b2b; flex: none; }
.fav { width: 16px; height: 16px; overflow: visible; }

.tabstrip { height: 32px; flex: none; background: #dee1e6; display: flex; align-items: center; padding: 0 17px 0 8px; }
.tab { width: 35px; height: 20px; flex: none; display: flex; align-items: center; padding-left: 8px; border-right: 1px solid #96999d; margin-top: -2px; }
.tab.wide { width: 36px; }
.tab.last { border-color: transparent; }
.tab.after { padding-left: 7px; }
.tab-active { position: relative; width: 36px; height: 32px; flex: none; background: #fff; border-radius: 8px 8px 0 0; display: flex; align-items: center; padding: 0 0 2px 15px; }
.tab-active::before, .tab-active::after { content: ""; position: absolute; bottom: 0; width: 8px; height: 8px; }
.tab-active::before { left: -8px; background: radial-gradient(circle at 0 0, transparent 7.5px, #fff 8px); }
.tab-active::after { right: -8px; background: radial-gradient(circle at 100% 0, transparent 7.5px, #fff 8px); }
.newtab { margin: -2px 0 0 16px; }
.winctl { margin: -8px 0 0 auto; display: flex; gap: 34px; }

.toolbar { height: 36px; flex: none; display: flex; align-items: center; padding-left: 11px; }
.nav { width: 22px; height: 22px; margin-right: 10px; fill: #5f6368; }
.omnibox { width: 1037px; height: 28px; border-radius: 14px; background: #f1f3f4; display: flex; align-items: center; padding: 0 10px 0 13px; margin-left: 1px; }
.url { margin-left: 11px; font-size: 14px; line-height: 20px; color: #80868b; white-space: nowrap; letter-spacing: -0.32px; }
.url b { font-weight: 400; color: #202124; }
.star { margin-left: auto; }
.exts { display: flex; gap: 16px; margin-left: 16px; }
.ext { width: 16px; height: 16px; overflow: visible; }
.vline { width: 1px; height: 16px; background: #c8cacd; flex: none; margin-left: 16px; }
.avatar { margin-left: 12px; }
.kebab { margin-left: 20px; fill: #5f6368; }

.bookmarks { height: 32px; flex: none; display: flex; align-items: center; border-bottom: 1px solid #b0b2b4; padding: 0 0 4px 15px; font-size: 12px; color: #5f6368; white-space: nowrap; }
.apps { display: grid; grid-template-columns: repeat(3, 3px); gap: 2px; width: 13px; }
.apps i { height: 3px; width: 3px; }
.bm-apps { margin-left: 10px; width: 82px; letter-spacing: -0.25px; }
.bm-row { display: flex; }
.bm { width: 32px; }
.bm-vps { width: 37px; margin-left: -8px; }
.bm-nc { margin-left: 0; }
.bm-a { margin-left: 16px; }
.bm-page { margin-left: 16px; }
.bm-fire { margin-left: 7px; }
.bm-fold { margin-left: 15px; }
.bm-ads { margin-left: 8px; width: 48px; }
.bm-line { margin: 0 11px 0 9px; }
.bm-other { margin-left: 8px; letter-spacing: -0.48px; }

.viewport { height: 648px; flex: none; display: flex; }
.side { width: 215px; flex: none; background: #eee; border-right: 1px solid #b5b5b5; overflow: hidden; color: #333; font-size: 12px; }
.subs { display: flex; flex-direction: column; padding-left: 4px; letter-spacing: -0.17px; }
.subs.first { padding-top: 7px; }
.subs.second { padding-top: 1px; }
.subs a { height: 32px; line-height: 32px; white-space: nowrap; }
.side hr { border: 0; height: 1px; background: #dcdcdc; margin: 9px 21px 10px 4px; }
.groups { margin-top: -1px; }
.group { height: 36px; display: flex; align-items: center; font-size: 13px; font-weight: 700; }
.glabel, .mlabel, .mtitle { display: flex; justify-content: flex-end; white-space: nowrap; flex: none; }
.glabel { letter-spacing: -0.27px; }
.group em { font: 400 8px/11px "Liberation Sans", Arial, sans-serif; -webkit-text-stroke: .2px #fff; height: 11px; margin-left: 6px; color: #fff; background: #ff8000; width: 26px; text-align: center; letter-spacing: .2px; }
.group em.new { width: 20px; margin-left: 5px; background: #4fae33; letter-spacing: -.3px; }
.chev { margin: 0 20px 0 auto; transform: translateX(-.5px); }
.manage { border-top: 1px solid #b5b5b5; margin-top: 10px; }
.mtitle { width: 37px; height: 45px; line-height: 45px; font-size: 14px; color: #999; letter-spacing: -.2px; }
.mrow { display: flex; align-items: center; justify-content: space-between; padding-right: 21px; height: 17px; }
.mlabel { width: 54px; letter-spacing: -.25px; }

.main { width: 1134px; flex: none; position: relative; overflow: hidden; padding: 0 13px 0 30px; background: #fff; display: flex; flex-direction: column; }
.chart { margin-bottom: 56px; }
.month { font-size: 11.5px; fill: #909090; }
.dash { border-top: 1px dashed #dcdcdc; flex: none; }
h1 { margin: 11px 0 0; height: 25px; display: flex; align-items: center; font-size: 16px; font-weight: 400; color: #333; white-space: nowrap; flex: none; }
.title { width: 321px; letter-spacing: .09px; -webkit-text-stroke: .5px #333; }
.count { color: #2a94e1; width: 56px; letter-spacing: -.35px; }
.controls { display: flex; margin-top: 12px; height: 26px; flex: none; }
button { font: inherit; padding: 0; border: 0; background: none; }
.add { width: 151px; background: #c5ebb9; border-radius: 2px; color: #fff; font-size: 12px; font-weight: 700; white-space: nowrap; letter-spacing: -.52px; }
.sel { width: 51px; margin-left: 10px; border: 1px solid #5f6f76; border-radius: 2px; display: flex; align-items: center; padding-left: 6px; }
.sel b { margin-left: 6px; width: 13px; height: 16px; background: #2a94e1; color: #fff; font-size: 11px; line-height: 16px; text-align: center; border-radius: 1px; }
.filter { width: 233px; margin-left: 10px; border: 1px solid #98a9b0; border-radius: 2px; display: flex; align-items: center; justify-content: space-between; font-size: 12.5px; letter-spacing: -.33px; color: #757575; padding-left: 5px; white-space: nowrap; }
.go { width: 21px; align-self: stretch; border-left: 1px solid #98a9b0; background: #f2f5f7; display: flex; align-items: center; justify-content: center; }
.adv { display: flex; align-items: center; gap: 7px; margin-left: 22px; font-size: 12px; color: #2a94e1; height: 24px; letter-spacing: -.2px; }
.adv span { width: 58px; }
.export { width: 75px; height: 26px; border: 1px solid #5f6f76; border-radius: 2px; display: flex; align-items: center; padding-left: 7px; gap: 7px; font-size: 12px; color: #66767d; margin-left: auto; flex: none; }
.export svg { margin-top: -3px; }
.export.bottom { margin: 20px 3px 0 auto; }

.table { margin-top: 20px; font: 12px/14px "Liberation Sans", Arial, sans-serif; color: #333; flex: none; }
.tr { display: grid; grid-template-columns: 30px 90px 55px 77px 47px 92px 126px 84px 82px 59px 91px 72px 50px 136px; }
.head { height: 38px; margin-bottom: 1px; }
.th { background: #e3ecf2; border-right: 1px solid #fff; display: flex; align-items: center; justify-content: space-between; padding: 0 6px 0 8px; white-space: nowrap; }
.th.chk { padding-bottom: 1px; }
.th:last-child { border-right: 0; }
.th.center { justify-content: center; padding: 0; }
.th.active { background: #2a94e1; color: #fff; font-weight: 700; letter-spacing: -.3px; }
.box { display: block; width: 12px; height: 12px; border: 1px solid #a3a3a3; border-radius: 2px; background: linear-gradient(#f0f0f0, #dcdcdc); }
.row { height: 41px; border-bottom: 1px solid #dfe3e5; }
.row:nth-child(odd) { background: #f9f9f9; }
.td { display: flex; align-items: center; white-space: nowrap; padding-bottom: 3px; min-width: 0; }
.td.chk { padding-left: 8px; }
.td.kw { padding: 0 0 0 6px; font-size: 13px; line-height: 13px; max-height: 40px; }
.kw span { display: block; }
a { color: #0a66c8; text-decoration: underline; }
.subs a { color: #333; text-decoration: none; }
.td.pos { padding: 0 0 1px 8px; gap: 4px; }
.pos small { font-size: 12px; color: #999; }
.td.num { justify-content: flex-end; padding-right: 8px; }
.td.vol { background: #e6f3fc; box-shadow: -1px 0 0 #e6f3fc; margin-right: 1px; padding-right: 7px; }
.row:nth-child(odd) .vol { background: #e1eff8; box-shadow: -1px 0 0 #e1eff8; }
.kd { padding-left: 8px; }
.td.link { padding: 1px 0 0 6px; gap: 8px; font-size: 13px; }
.link svg { margin-top: 1px; }
.td.trend { align-items: flex-end; padding: 0 0 10px 17px; }
.bars { display: flex; align-items: flex-end; height: 20px; }
.bars i { width: 3px; background: #67a6da; }
.td.serp { padding: 0 0 1px 18px; }
.ago { justify-content: center; }

.suggest { position: absolute; left: 917px; bottom: 0; width: 207px; height: 28px; background: #bb4e2b; border-radius: 2px 2px 0 0; display: flex; align-items: center; color: #fff; font: 15px/28px "Liberation Sans", Arial, sans-serif; white-space: nowrap; }
.horn { width: 32px; height: 28px; border-right: 1px solid #d0795c; padding: 6px 0 0 7px; }
.stext { width: 159px; padding-left: 10px; }
.suggest > svg { margin-left: 0; }

.vscroll { width: 17px; background: #f0f0f0; flex: none; display: flex; flex-direction: column; align-items: center; padding-top: 7px; }
.vthumb { width: 13px; height: 172px; background: #c1c1c1; margin-top: 138px; }
.down { margin: auto 0 7px; }
.hscroll { height: 17px; flex: none; background: #f0f0f0; display: flex; align-items: center; padding-left: 6px; }
.hthumb { width: 1265px; height: 13px; background: #c1c1c1; margin-left: 39px; }
.right { margin-left: auto; }
.corner { width: 17px; height: 17px; background: #dcdcdc; margin-left: 5px; }
</style>
